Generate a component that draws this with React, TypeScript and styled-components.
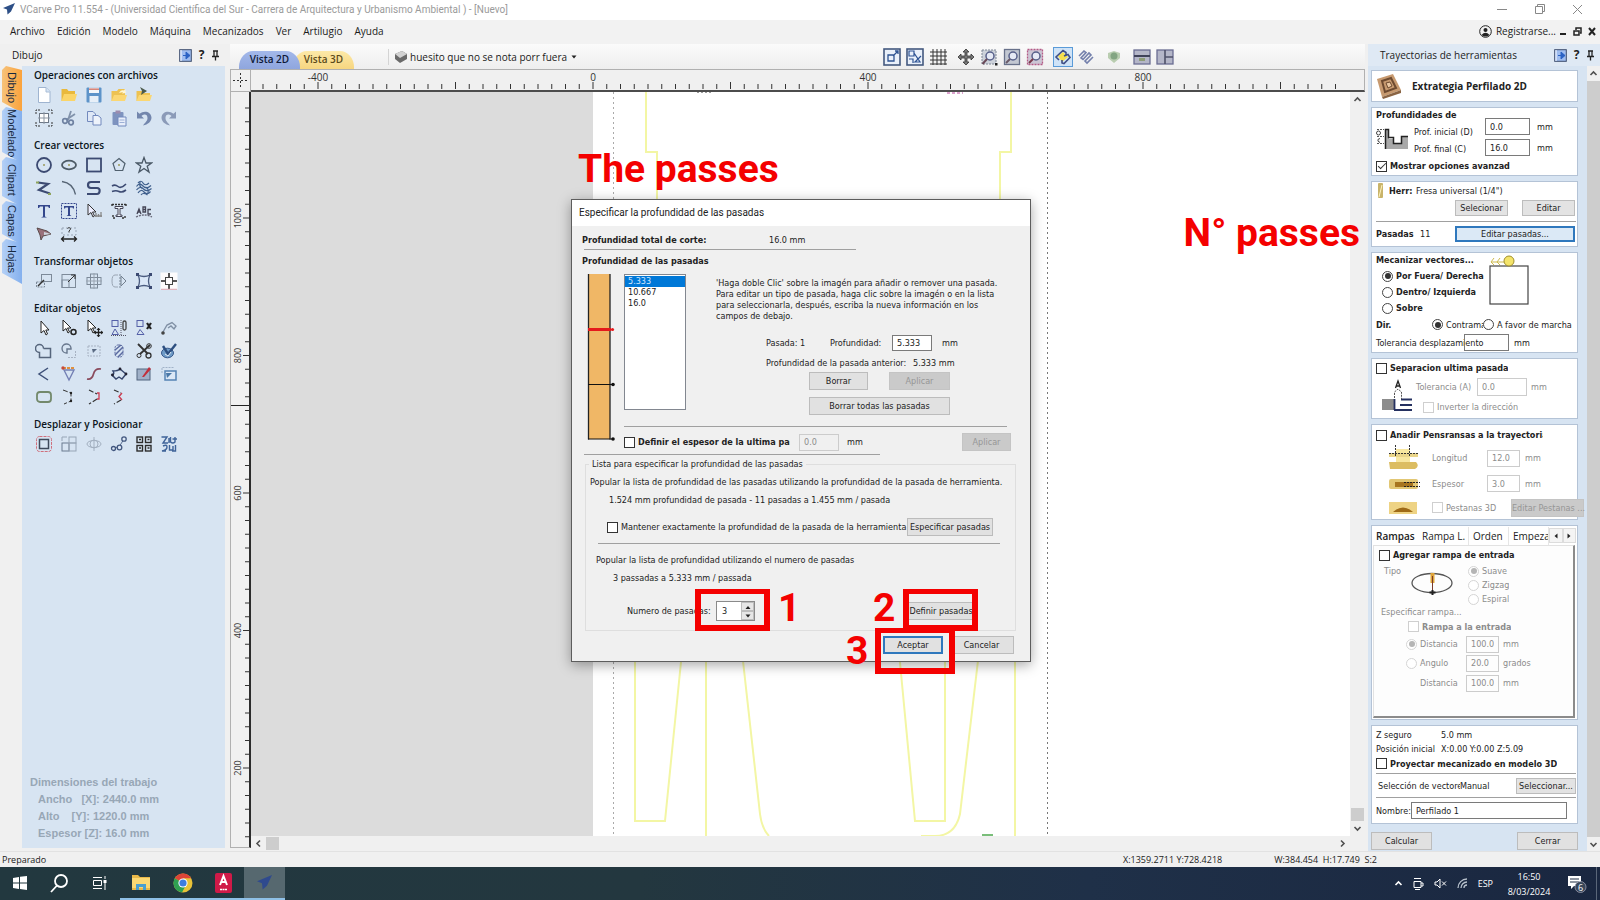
import React from 'react';
import styled, { createGlobalStyle, css } from 'styled-components';

const uiFont = '"Open Sans", "Noto Sans", sans-serif';
const dialogFont = '"DejaVu Sans Condensed", "DejaVu Sans", "Open Sans", sans-serif';
const boldFont = '"Open Sans", "Noto Sans", sans-serif';
const blue = '#d7e4f2';
const line = '#a0a0a0';

const Global = createGlobalStyle`
  * { box-sizing: border-box; }
  body { margin: 0; overflow: hidden; background: #f0f0f0; font-family: ${uiFont}; font-size: 11px; color: #1b1b1b; }
  button, input, select { font: inherit; color: inherit; margin: 0; padding: 0; }
  button { border: 0; background: none; }
  svg { display: block; flex: none; }
  h1, h2, h3, p, dl, dd, dt { margin: 0; font-size: inherit; }
`;

/* ---------- frame ---------- */
const Shell = styled.div`
  display: flex; flex-direction: column; height: 100vh; min-height: 900px; white-space: nowrap;
`;
const TitleBar = styled.header`
  display: flex; align-items: center; height: 20px; padding: 0 18px 2px 3px; gap: 5px; background: #fff; color: #9a9a9a; font: 10px Roboto, sans-serif;
`;
const Spacer = styled.span` flex: 1; `;
const WindowButtons = styled.div<{ $gap: number }>` display: flex; align-items: center; gap: ${p => p.$gap}px; `;
const MenuBar = styled.nav`
  display: flex; align-items: center; height: 24px; padding: 0 4px 2px 10px; gap: 12px; background: #f2f2f2; font-size: 10px;
`;
const MenuItem = styled.button` height: 20px; `;
const Workspace = styled.main` display: flex; flex: 1; min-height: 0; `;

/* ---------- side docks ---------- */
const DockHeader = styled.div<{ $tint?: boolean }>`
  display: flex; align-items: center; height: 22px; gap: 5px; font: 10px ${uiFont};
  padding: 0 5px 0 12px; background: ${p => (p.$tint ? '#dfe9f4' : '#f0f0f0')};
`;
const HelpMark = styled.button` font-weight: 700; width: 9px; font-size: 12px; line-height: 14px; `;
const LeftDock = styled.aside` display: flex; flex-direction: column; width: 225px; flex: none; padding-bottom: 3px; `;
const LeftBody = styled.div` display: flex; flex: 1; min-height: 0; `;
const SideTabs = styled.div` width: 22px; padding-left: 2px; display: flex; flex-direction: column; `;
const SideTab = styled.button<{ $h: number; $on?: boolean }>`
  height: ${p => p.$h}px; width: 20px; writing-mode: vertical-rl; text-align: center; padding-bottom: 4px;
  font-family: "Liberation Sans", sans-serif; font-size: 11px; line-height: 20px; color: #16283f;
  background: ${p => (p.$on ? 'linear-gradient(90deg,#f6c27a,#fba33c)' : 'linear-gradient(90deg,#b4d0f6,#84b0ee)')};
  clip-path: polygon(0 4px, 4px 0, 100% 4px, 100% 100%, 0 calc(100% - 11px));
  margin-bottom: -6px;
`;
const ToolPanel = styled.div`
  flex: 1; background: ${blue}; padding: 1px 0 6px 12px; display: flex; flex-direction: column;
`;
const ToolSection = styled.section` margin-bottom: 8px; `;
const ToolHeading = styled.h2` height: 16px; font: 600 10px/16px ${uiFont}; color: #0c1620; `;
const ToolRow = styled.div` display: flex; height: 23px; margin-left: -3px; `;
const ToolButton = styled.button` width: 25px; height: 23px; display: grid; place-items: center; `;
const JobSize = styled.dl`
  margin-top: auto; margin-left: -4px; color: #97a7b6; font: 700 11px/17px "Liberation Sans", sans-serif; white-space: pre;
`;
const JobLine = styled.dd` padding-left: 8px; `;

/* ---------- centre ---------- */
const Centre = styled.section` flex: 1; min-width: 0; display: flex; flex-direction: column; padding: 0 3px 0 5px; `;
const ViewBar = styled.div` display: flex; align-items: center; height: 25px; padding-left: 9px; background: linear-gradient(#fbfbfb,#eeeeee); `;
const ViewTab = styled.button<{ $on?: boolean }>`
  align-self: flex-end; width: 61px; height: 18px; border-radius: 14px 14px 0 0 / 16px 16px 0 0; margin-right: -7px; padding-bottom: 2px;
  font-size: 10px; font-weight: 600; position: relative; z-index: ${p => (p.$on ? 1 : 0)};
  color: ${p => (p.$on ? '#0d1836' : '#5b4a1a')};
  background: ${p => (p.$on ? 'linear-gradient(#a3b8ea,#8fa6de)' : 'linear-gradient(#fde9a8,#f7d680)')};
`;
const LayerPicker = styled.label` display: flex; align-items: center; gap: 3px; margin-left: 41px; padding-left: 5px; height: 16px; border-left: 1px solid #d4d4d4; `;
const LayerSelect = styled.select` appearance: none; border: 0; background: none; font: 10px ${uiFont}; margin-left: -1px; `;
const ViewTools = styled.div` display: flex; align-items: center; margin-left: 302px; `;
const ViewTool = styled.button<{ $on?: boolean; $sep?: boolean }>`
  width: 20px; height: 20px; display: grid; place-items: center; margin-left: ${p => (p.$sep ? 8 : 3)}px;
  ${p => p.$on && css` background: #cfe3f7; outline: 1px solid #5a9bd8; outline-offset: -1px; `}
`;
const DrawArea = styled.div`
  flex: 1; min-height: 0; display: grid; grid-template: 23px 1fr / 21px 1fr; 
`;
const RulerCorner = styled.div` border: 1px solid #b0b0b0; display: grid; place-items: center; `;
const TopRuler = styled.div` overflow: hidden; border: 1px solid #b0b0b0; border-left: 0; border-bottom: 2px solid #4c4c4c; `;
const LeftRuler = styled.div` overflow: hidden; border: 1px solid #b0b0b0; border-top: 0; border-right: 2px solid #2c2c2c; margin-bottom: 3px; `;
const ScrollGrid = styled.div` position: relative; display: grid; grid-template: 1fr 15px / 1fr 15px; min-height: 0; min-width: 0; `;
const Canvas = styled.div`
  position: relative; overflow: hidden; background: linear-gradient(90deg, #dcdcdc 342px, #fff 342px);
`;
const Scrollbar = styled.div<{ $v?: boolean }>`
  display: flex; flex-direction: ${p => (p.$v ? 'column' : 'row')}; align-items: center; background: #f0f0f0;
`;
const ScrollArrow = styled.button` width: 15px; height: 15px; display: grid; place-items: center; `;
const Thumb = styled.div` width: 13px; height: 13px; background: #cdcdcd; `;

/* ---------- dialog ---------- */
const Dialog = styled.div`
  position: absolute; left: 320px; top: 107px; width: 460px; border: 1px solid #5d5d5d; background: #f0f0f0;
  box-shadow: 0 3px 12px rgba(0,0,0,.35); font-family: ${dialogFont}; font-size: 9px; color: #222;
`;
const DialogTitle = styled.h1` height: 26px; padding-left: 7px; background: #fff; font: 400 10px/25px Roboto, sans-serif; `;
const DialogBody = styled.div` padding: 5px 14px 7px 10px; `;
const Strong = styled.b` font: 700 9px ${dialogFont}; `;
const DRow = styled.div<{ $h?: number; $mt?: number; $pl?: number }>`
  display: flex; align-items: center; height: ${p => p.$h ?? 18}px; margin-top: ${p => p.$mt ?? 0}px; padding-left: ${p => p.$pl ?? 0}px;
`;
const Cell = styled.span<{ $w: number }>` width: ${p => p.$w}px; flex: none; `;
const ClippedCell = styled(Cell)` overflow: hidden; `;
const Rule = styled.hr<{ $w?: number; $ml?: number; $mt?: number }>`
  border: 0; height: 1px; background: ${line}; margin: ${p => p.$mt ?? 0}px 0 0 ${p => p.$ml ?? 0}px; width: ${p => (p.$w ? p.$w + 'px' : 'auto')};
`;
const PassGrid = styled.div` display: grid; grid-template-columns: 37px 1fr; padding-left: 5px; margin-top: 2px; `;
const PassTop = styled.div` display: flex; `;
const ListBox = styled.div`
  width: 62px; height: 136px; flex: none; background: #fff; border: 1px solid #828790; padding-top: 1px;
`;
const ListItem = styled.div<{ $on?: boolean }>`
  height: 11px; line-height: 11px; padding-left: 3px; ${p => p.$on && css` background: #0078d7; color: #cfe6ff; `}
`;
const PassForm = styled.div` margin-left: 30px; padding-top: 4px; `;
const HelpText = styled.p` line-height: 11px; `;
const Button = styled.button<{ $w: number; $h?: number; $hot?: boolean }>`
  width: ${p => p.$w}px; height: ${p => p.$h ?? 18}px; flex: none; background: #e1e1e1; border: 1px solid #bcbcbc; text-align: center; white-space: nowrap;
  ${p => p.$hot && css` border: 2px solid #2f78bd; `}
  &:disabled { background: #cacaca; border-color: #c4c4c4; color: #969696; }
`;
const ButtonPair = styled.div<{ $gap: number; $mt: number; $pl?: number; $end?: boolean }>`
  display: flex; gap: ${p => p.$gap}px; margin-top: ${p => p.$mt}px; padding-left: ${p => p.$pl ?? 0}px; 
  ${p => p.$end && css` justify-content: flex-end; padding-right: 2px; `}
`;
const Field = styled.input<{ $w: number; $h?: number; $ml?: number; $clear?: boolean }>`
  width: ${p => p.$w}px; height: ${p => p.$h ?? 17}px; flex: none; border: 1px solid #7a7a7a; background: ${p => (p.$clear ? 'transparent' : '#fff')}; padding: 0 4px; margin-left: ${p => p.$ml ?? 0}px;
  &:disabled { border-color: #cccccc; color: #8c8c8c; background: transparent; }
`;
const Unit = styled.span<{ $ml?: number }>` margin-left: ${p => p.$ml ?? 7}px; `;
const Box = styled.input.attrs({ type: 'checkbox' })`
  appearance: none; width: 11px; height: 11px; flex: none; border: 1px solid #333; background: #fff; margin-right: 3px;
  display: inline-grid; place-items: center;
  &:checked::after { content: ''; width: 7px; height: 3px; border: solid #333; border-width: 0 0 1px 1px; transform: translateY(-1px) rotate(-45deg); }
  &:disabled { border-color: #cfcfcf; }
`;
const Dot = styled.input.attrs({ type: 'radio' })`
  appearance: none; width: 11px; height: 11px; flex: none; border: 1px solid #444; border-radius: 50%; background: #fff; margin-right: 3px;
  display: inline-grid; place-items: center;
  &:checked::after { content: ''; width: 6px; height: 6px; border-radius: 50%; background: #333; }
  &:disabled { border-color: #d4d4d4; }
  &:disabled:checked::after { background: #b5b5b5; }
`;
const Check = styled.label<{ $w?: number; $dim?: boolean; $bold?: boolean }>`
  display: flex; align-items: center; flex: none; overflow: hidden; width: ${p => (p.$w ? p.$w + 'px' : 'auto')};
  ${p => p.$dim && css` color: #8c8c8c; `}
  ${p => p.$bold && css` font: 700 9px ${dialogFont}; `}
`;
const Group = styled.fieldset` margin: 3px 0 0 3px; padding: 0 0 9px; border: 1px solid #dedede; min-width: 0; `;
const Legend = styled.legend` height: 12px; line-height: 12px; margin-left: 3px; padding: 0 3px; `;
const Spin = styled.span` display: flex; width: 39px; height: 20px; border: 1px solid #8a8a8a; background: #fff; `;
const SpinInput = styled.input` width: 24px; border: 0; padding-left: 5px; background: transparent; `;
const SpinKeys = styled.span` display: grid; flex: 1; `;
const SpinKey = styled.button` background: #e6e6e6; border: 1px solid #bdbdbd; display: grid; place-items: center; min-height: 0; `;

/* annotations drawn over the window */
const Frame = styled.i<{ $x: number; $y: number; $w: number; $h: number }>`
  position: absolute; left: ${p => p.$x}px; top: ${p => p.$y}px; width: ${p => p.$w}px; height: ${p => p.$h}px; border: 6px solid #f40000; border-top-width: 5px; pointer-events: none;
`;
const Mark = styled.strong<{ $x?: number; $right?: number; $y: number }>`
  position: absolute; top: ${p => p.$y}px; color: #f40000; font: 700 39px/40px Roboto, sans-serif;
  ${p => (p.$right !== undefined ? css` right: ${p.$right}px; ` : css` left: ${p.$x}px; `)}
`;

/* ---------- right dock ---------- */
const RightDock = styled.aside` width: 232px; flex: none; background: ${blue}; font-family: ${dialogFont}; font-size: 9px; color: #222; `;
const RightBody = styled.div` display: flex; justify-content: space-between; `;
const CardStack = styled.div` width: 210px; padding: 4px 0 0 3px; display: flex; flex-direction: column; gap: 5px; `;
const Card = styled.section` background: #fff; border: 1px solid #b4c3d6; padding: 0 1px 0 4px; width: 207px; `;
const CardTitle = styled.h2` font: 700 10px/29px ${boldFont}; margin-left: 10px; `;
const SubHead = styled.h3` font: 700 9px/15px ${dialogFont}; `;
const Line = styled.div<{ $h: number; $mt?: number; $pl?: number; $dim?: boolean }>`
  display: flex; align-items: center; height: ${p => p.$h}px; margin-top: ${p => p.$mt ?? 0}px; padding-left: ${p => p.$pl ?? 0}px;
  ${p => p.$dim && css` color: #8c8c8c; `}
`;
const Columns = styled.div<{ $left: number; $h?: number }>` display: grid; grid-template-columns: ${p => p.$left}px 1fr; height: ${p => (p.$h ? p.$h + 'px' : 'auto')}; `;
const DepthFields = styled.div` padding-top: 10px; display: grid; row-gap: 4px; height: 48px; `;
const WithIcon = styled.div` display: flex; `;
const Stack = styled.div` flex: 1; `;
const ToolAction = styled(Button)` background: #e3e3e3; `;
const EditPasses = styled(Button)` background: #dbe9f6; `;
const TabStrip = styled.div` display: flex; align-items: center; height: 19px; margin-left: -4px; font: 10px ${uiFont}; `;
const RampTab = styled.button<{ $w: number; $on?: boolean }>`
  width: ${p => p.$w}px; height: 18px; text-align: left; padding-left: 4px; overflow: hidden; flex: none;
  ${p => (p.$on ? css` font-weight: 600; ` : css` border-right: 1px solid #e6e6e6; `)}
`;
const TabArrow = styled.button` width: 14px; height: 15px; border: 1px solid #dcdcdc; background: #f4f4f4; display: grid; place-items: center; `;
const TabPage = styled.div` margin: 0 1px 1px -3px; padding: 0 0 23px 5px; border: 1px solid #e2e2e2; border-right: 2px solid #8b8b8b; border-bottom: 2px solid #8b8b8b; background: #fdfdfd; `;
const BottomButtons = styled.div` display: flex; justify-content: space-between; margin-top: 3px; `;
const TallScroll = styled(Scrollbar)` width: 13px; height: 786px; `;
const TallThumb = styled.div` width: 13px; flex: 1; background: #cdcdcd; `;

/* ---------- status + task bar ---------- */
const StatusBar = styled.footer`
  display: flex; align-items: center; height: 16px; padding: 0 223px 0 2px; background: #f0f0f0; border-top: 1px solid #e2e2e2; font-size: 9px;
`;
const Coords = styled.span` margin-right: 52px; `;
const TaskBar = styled.nav`
  display: flex; height: 33px; background: linear-gradient(90deg,#22383f,#23373f 40%,#1f3048 68%,#1a2740); color: #fff;
`;
const TaskButton = styled.button<{ $open?: boolean; $on?: boolean; $w: number }>`
  width: ${p => p.$w}px; display: grid; place-items: center; border-bottom: 2px solid ${p => (p.$open || p.$on ? '#8fc0e6' : 'transparent')};
  background: ${p => (p.$on ? '#56686f' : 'none')}; background-clip: padding-box; 
`;
const Tray = styled.div` margin-left: auto; display: flex; align-items: center; font-size: 9px; padding-right: 3px; gap: 10px; `;
const Clock = styled.time` text-align: center; line-height: 15px; width: 48px; margin: 0 4px 0 2px; `;
const Edge = styled.span` border-left: 1px solid #5a6678; height: 33px; margin-left: -1px; `;

/* ---------- drawings ---------- */
const n = '#3c4a72';
const g = '#7d8a99';
const shapes: Record<string, React.ReactNode> = {
  newf: <><path d="M3.500 1.500H11L15 5.500V16.500H3.500Z" fill="#fff" stroke="#9fb4d0" /><path d="M11 1.500V6H15" fill="#d5e4f5" stroke="#a9bdd6" /></>,
  open: <><path d="M1.500 3H7L8.500 5H15V15H1.500Z" fill="#e9b93c" /><path d="M1.500 15L4 8H17L15 15Z" fill="#fbd568" /></>,
  save: <><rect x="1.500" y="1.500" width="15" height="15" rx="1" fill="#5d93c9" /><rect x="4" y="1.500" width="10" height="5.500" fill="#f3f6fa" /><rect x="4" y="2.500" width="10" height="1.300" fill="#cf6a5c" /><rect x="4.500" y="10" width="9" height="6.500" fill="#e7eff8" /></>,
  imp: <><path d="M1.500 5H7L8.500 3H15V15H1.500Z" fill="#edc252" /><path d="M1.500 15L4 9H17L15 15Z" fill="#fbd773" /><path d="M9 7C11 4 12 4 14 4.500L15 3L16 7L12 7.500L13 6" fill="#fff6d4" /></>,
  imp2: <><path d="M1.500 5H7L8.500 7H15V15H1.500Z" fill="#edc252" /><path d="M1.500 15L4 9H17L15 15Z" fill="#fbd773" /><path d="M5 1L12 5L6 9L7 5Z" fill="#4b5a4c" /></>,
  job: <><path d="M1 5V1H5M13 1H17V5M17 13V17H13M5 17H1V13" stroke="#333" strokeDasharray="2 1" fill="none" /><rect x="4.500" y="4.500" width="9" height="9" fill="#fff" stroke="#6c7785" /><path d="M9 3V15M3 9H15" stroke="#8b95a2" /></>,
  cut: <><path d="M11 2L8 11M15 5L6 11" stroke="#8192ab" strokeWidth="1.800" /><circle cx="5" cy="12" r="2.300" fill="none" stroke="#6f82a2" strokeWidth="1.700" /><circle cx="11" cy="13.500" r="2.300" fill="none" stroke="#6f82a2" strokeWidth="1.700" /></>,
  copy: <><path d="M2.500 2.500H8L10.500 5V12.500H2.500Z" fill="#dfe8f6" stroke="#7289bd" /><path d="M8 6.500H13L16 9V16H8Z" fill="#eef3fb" stroke="#7289bd" /></>,
  paste: <><rect x="2.500" y="3" width="11" height="13" rx="1" fill="#7e93bf" /><rect x="5.500" y="1.500" width="5" height="3" fill="#9c8cae" /><path d="M8 8H16V17H8Z" fill="#e8eefa" stroke="#7289bd" /><path d="M9.500 11H14.500M9.500 13.500H14.500" stroke="#9db0d6" /></>,
  undo: <path d="M2 2.500V9.500H9L6.500 7C9 4.500 12.500 5 12.500 9C12.500 12 10.500 13 8 16.500C13 15.500 16.500 12.500 16.500 8.500C16 2.500 9 1 4.500 4.800Z" fill="#7386ad" />,
  redo: <path d="M16 2.500V9.500H9L11.500 7C9 4.500 5.500 5 5.500 9C5.500 12 7.500 13 10 16.500C5 15.500 1.500 12.500 1.500 8.500C2 2.500 9 1 13.500 4.800Z" fill="#8b9ab8" />,
  circle: <><circle cx="9" cy="9" r="7" fill="none" stroke={n} strokeWidth="1.800" /><circle cx="9" cy="9" r="1" fill="#9a9a5a" /></>,
  ellipse: <><ellipse cx="9" cy="9" rx="7" ry="4.300" fill="none" stroke="#4d5b66" strokeWidth="1.800" /><circle cx="9" cy="9" r="1" fill="#9a9a5a" /></>,
  rect: <rect x="2" y="2.500" width="14" height="13" fill="none" stroke={n} strokeWidth="1.800" />,
  poly: <><path d="M9 2.500L15 7.500L12.700 14.500H5.300L3 7.500Z" fill="none" stroke="#50606e" strokeWidth="1.200" /><circle cx="9" cy="9" r="1" fill="#9a9a5a" /></>,
  star: <path d="M9 1.500L11 7H16.500L12.200 10.300L14 16L9 12.500L4 16L5.800 10.300L1.500 7H7Z" fill="none" stroke="#4a5866" strokeWidth="1.300" />,
  zig: <><path d="M3 3.500L13 5L4 11L15 14.500" fill="none" stroke={n} strokeWidth="2.200" /><path d="M1 3.500H4M13 15H16" stroke="#8ea45c" strokeWidth="2" /></>,
  arc: <path d="M2 2.500Q13 4 15.500 15.500" fill="none" stroke="#566474" strokeWidth="1.300" />,
  s: <path d="M15 3H6C2 3 2 9 6 9H12C16 9 15 15 12 15H2" fill="none" stroke={n} strokeWidth="2.200" />,
  wave: <><path d="M2 7Q5 5 8 7.500T16 5" fill="none" stroke={n} strokeWidth="1.600" /><path d="M2 12.500Q6 11 9 12.500T16 11" fill="none" stroke={n} strokeWidth="1.600" /></>,
  swirl: <g fill="none" stroke="#3f5f8c" strokeWidth="1.200"><path d="M3 4Q6 .5 8 4T14 4M1.500 7.500Q4.500 3 8 7T16 6.500M1.500 11Q5 6.500 8.500 10T16.500 9.500M3 14Q6 9.500 9 13T15.500 12.500M6 16Q8 13 12.500 16" /><path d="M5 3Q4 8 7.500 9.500M10.500 8Q14 9 13 14" /></g>,
  text: <path d="M3 3H15V6H14L13 4.500H10V14.500L12 15.500H6L8 14.500V4.500H5L4 6H3Z" fill="#34478c" />,
  textbox: <><rect x="1.500" y="1.500" width="15" height="15" fill="none" stroke="#34478c" strokeDasharray="2 1" /><path d="M4 4H14V6.500H13L12.500 5.500H10V13L11.500 14H6.500L8 13V5.500H5.500L5 6.500H4Z" fill="#34478c" /></>,
  textsel: <><path d="M3 2V13L6 10.500L8 15L9.500 14L7.500 10H11Z" fill="#eef" stroke="#333" /><path d="M10 14H17M11 11V15M13.500 12V15M16 10V15" stroke="#888" strokeWidth="1.300" /></>,
  textarc: <><path d="M2 2.500H16M2 2V5M16 2V5M3 13V16H6M12 16H15V13" stroke="#333" strokeDasharray="2 1" strokeWidth="1.400" /><path d="M5 4.500H13V6.500H10V13H12V14.500H6V13H8V6.500H5Z" fill="#eef3fa" stroke="#445" /></>,
  textcurve: <><path d="M1 15Q9 11 17 15" fill="none" stroke="#667" strokeDasharray="2 1" strokeWidth="1.300" /><path d="M2 12L4 7L6 12M3 10H5M8 4.500V10H10.500V7.500H8V5H10.500V7.500M16 7.500H13V12H16" fill="none" stroke="#445" strokeWidth="1.300" /></>,
  bird: <><path d="M2 3L12 6L16 9L8 11L6 15L5 10Z" fill="#99707a" stroke="#5a4a4a" /><path d="M9 7L16 9L9 10Z" fill="#cfd6dd" /></>,
  measure: <><path d="M1.500 14H16.500M4 11.500L1.500 14L4 16.500M14 11.500L16.500 14L14 16.500" stroke="#222" strokeWidth="1.300" fill="none" /><rect x="2" y="3" width="14" height="7" fill="none" stroke="#99a5b5" strokeDasharray="2 2" /><path d="M7.500 3.500Q9 1.500 10.500 3.500Q10.500 5 9 6V7.500" stroke="#333" fill="none" /></>,
  move: <><rect x="6.500" y="2.500" width="10" height="7" fill="none" stroke={g} /><rect x="1.500" y="10" width="8" height="5" fill="none" stroke={g} strokeDasharray="2 1" /><path d="M3 14L9 8" stroke="#333" strokeWidth="1.500" /></>,
  size: <><rect x="2" y="2.500" width="13.500" height="13" fill="none" stroke={g} /><rect x="2" y="8" width="7" height="7.500" fill="none" stroke={g} /><path d="M8 10L15 3M11 3H15V7" stroke="#333" fill="none" /></>,
  centre: <><rect x="5.500" y="2" width="7" height="14" fill="none" stroke={g} /><rect x="2" y="5.500" width="14" height="7" fill="none" stroke={g} /><path d="M9 1V17M1 9H17" stroke="#98a3b0" /></>,
  mirror: <><path d="M8 3H5Q2 3 2 9T5 15H8" fill="none" stroke="#9aa5b3" /><path d="M10 2V16" stroke={g} strokeDasharray="2 1" /><path d="M11 4L16 9L11 14Z" fill="none" stroke="#73808f" /></>,
  distort: <><path d="M3 3Q9 6 15 3Q12 9 15 15Q9 12 3 15Q6 9 3 3Z" fill="#dbe8f8" stroke="#4b5c80" strokeWidth="1.300" /><g fill="#3c4a72"><rect x="1" y="1" width="3" height="3" /><rect x="14" y="1" width="3" height="3" /><rect x="1" y="14" width="3" height="3" /><rect x="14" y="14" width="3" height="3" /></g></>,
  align: <><rect x=".5" y=".5" width="17" height="17" fill="#fdfbfc" /><rect x="5.500" y="5.500" width="7" height="7" fill="none" stroke="#444" /><path d="M9 1V5M9 13V17M1 9H5M13 9H17" stroke="#222" strokeWidth="1.500" /><path d="M1 17.300H17" stroke="#dca4b0" /></>,
  sel: <path d="M6 2V14L9 11.500L11 16L12.500 15L10.800 11H14Z" fill="#fff" stroke="#222" />,
  node: <><path d="M3 1V12L6 9.500L8 14L9.500 13L7.500 9H11Z" fill="#fff" stroke="#222" /><circle cx="13.500" cy="13" r="2.500" fill="none" stroke="#222" strokeWidth="1.500" /></>,
  nodemove: <><path d="M3 1V12L6 9.500L8 14L9.500 13L7.500 9H11Z" fill="#fff" stroke="#222" /><path d="M13.500 9V18M9 13.500H18" stroke="#222" strokeWidth="1.300" /><path d="M13.500 9L15.500 11H11.500ZM13.500 18L15.500 16H11.500ZM9 13.500L11 11.500V15.500ZM18 13.500L16 11.500V15.500Z" fill="#222" /></>,
  group: <><rect x="2" y="1.500" width="6" height="6" fill="none" stroke="#5560a8" /><path d="M2 15.500L5 10L8.500 15.500Z" fill="none" stroke="#5560a8" /><path d="M11 1V17M1 16.500H17" stroke="#556" strokeDasharray="1 1" /><rect x="13" y="2" width="3" height="9" rx="1.500" fill="none" stroke="#444" strokeWidth="1.300" /></>,
  ungroup: <><rect x="2" y="1.500" width="6" height="6" fill="none" stroke="#5560a8" /><path d="M2 15.500L5 10.500L9 15.500Z" fill="none" stroke="#5560a8" /><path d="M12 4L16 10M16 4L12 10" stroke="#222" strokeWidth="2.200" /></>,
  measure2: <><path d="M3 13L7 6L12 3.500L16 7L14 10L11 7L8 9" fill="none" stroke="#8090a5" strokeWidth="1.400" /><circle cx="3" cy="14" r="1.800" fill="#444" /></>,
  weld: <path d="M8.500 6.500A4 4 0 1 0 4.500 10.500V15.500H15.500V6.500H8.500" fill="none" stroke="#56657c" strokeWidth="1.500" />,
  subtract: <><path d="M11 6A4.500 4.500 0 1 0 7 11V7H11Z" fill="none" stroke="#68778d" strokeWidth="1.400" /><path d="M8 15.500H15.500V8" fill="none" stroke="#a7b2c2" strokeDasharray="2 1" /></>,
  overlap: <><rect x="3" y="4" width="12" height="10" fill="none" stroke="#a7b2c2" strokeDasharray="2 1" /><path d="M7 7H12L8 11Z" fill="#5b6b83" /></>,
  trim: <><rect x="5" y="3" width="8" height="12" rx="3" fill="none" stroke="#5a6aa0" strokeDasharray="2 1" /><path d="M5 8L11 3M5 13L13 5M8 15L13 10" stroke="#5a6aa0" strokeWidth="1.500" /></>,
  scissors: <><path d="M3 2L13 12M15 3L5 12" stroke="#333" strokeWidth="1.800" /><circle cx="13.500" cy="13.500" r="2.500" fill="none" stroke="#333" strokeWidth="1.300" /><circle cx="4" cy="13.500" r="2" fill="none" stroke="#333" /><circle cx="14" cy="4" r="2.300" fill="none" stroke="#333" /></>,
  fit: <><ellipse cx="7.500" cy="11" rx="6" ry="4.800" fill="#6f9cc8" stroke="#37588a" /><path d="M3 4L8 12L16 2" fill="none" stroke="#2d4f80" strokeWidth="2.400" /><path d="M5 12L8 14L11 10" fill="none" stroke="#dfeaf6" /></>,
  corner: <path d="M13 3L4 9L13 15" fill="none" stroke="#3d5078" strokeWidth="1.500" />,
  tri: <><path d="M4 5H14L9 15Z" fill="none" stroke="#7480b4" strokeWidth="1.400" /><path d="M3 3H15" stroke="#e0903e" strokeWidth="2.200" strokeDasharray="3 1" /><circle cx="3" cy="3" r="1.700" fill="#c64a3a" /></>,
  curve: <path d="M2 14Q7 15 8.500 9T16 4" fill="none" stroke="#8a4a5c" strokeWidth="1.700" />,
  join: <><path d="M3 6Q5 9 2 10L6 14L9 12L12 14L16 9L10 4Q8 6 3 6Z" fill="none" stroke="#35456c" strokeWidth="1.400" /><circle cx="2.500" cy="10" r="1.400" fill="#223" /><circle cx="16" cy="9" r="1.400" fill="#223" /><circle cx="10" cy="4" r="1.400" fill="#223" /></>,
  erase: <><rect x="2" y="4" width="13" height="11" fill="#9fb0c8" stroke="#53647f" /><path d="M7 12L14 2L16 4L9 12Z" fill="#c2303c" /></>,
  layer: <><path d="M2 8V2.500H14" fill="none" stroke="#a0b2c8" strokeDasharray="2 1" /><rect x="5" y="6" width="11" height="9" fill="#dce8f6" stroke="#5683b4" strokeWidth="1.500" /><path d="M6 8H12L7 13Z" fill="#4978a8" /></>,
  round: <rect x="2" y="4" width="14" height="10" rx="3" fill="none" stroke="#73896c" strokeWidth="1.800" />,
  ext1: <><path d="M3 2L11 5V13L4 16" fill="none" stroke="#333" strokeDasharray="5 2" /><circle cx="11" cy="5" r="1.200" fill="#222" /><circle cx="11" cy="13" r="1.200" fill="#222" /></>,
  ext2: <><path d="M4 2L12 6M12 11L4 16" fill="none" stroke="#333" strokeWidth="1.200" strokeDasharray="5 2" /><path d="M12 5H14V11H12" fill="none" stroke="#cc3a50" strokeWidth="1.300" /></>,
  ext3: <><path d="M4 2L11 5M11 12L4 16" fill="none" stroke="#333" strokeWidth="1.200" strokeDasharray="5 2" /><path d="M12 5L9 8.500L12 12" fill="none" stroke="#cc3a50" strokeWidth="1.300" /></>,
  offset: <><rect x="1.500" y="1.500" width="15" height="15" rx="3" fill="none" stroke="#cf6f7c" strokeDasharray="3 1" /><rect x="4.500" y="4.500" width="9" height="9" fill="none" stroke="#3f4a5c" strokeWidth="1.500" /></>,
  array: <g fill="none" stroke="#97a5b6"><rect x="2" y="8" width="7" height="8" stroke="#6b7b8f" /><rect x="9" y="8" width="7" height="8" /><rect x="9" y="2" width="7" height="6" /><path d="M2 6V2H7" /></g>,
  polar: <g fill="none" stroke="#a3b0c0"><ellipse cx="9" cy="9" rx="7" ry="3.500" /><circle cx="9" cy="9" r="4" /><path d="M9 2V16" /></g>,
  paths: <><path d="M3 13L9 12L14 4" fill="none" stroke="#5b6f92" /><g fill="#dce8f6" stroke="#42577f" strokeWidth="1.300"><circle cx="3.500" cy="13.500" r="2" /><circle cx="9.500" cy="12.500" r="2.300" /><circle cx="14" cy="4" r="2.200" /></g></>,
  nest: <g fill="none" stroke="#2c2c2c" strokeWidth="1.400"><rect x="2" y="2" width="5.500" height="5.500" /><rect x="10.500" y="2" width="5.500" height="5.500" /><rect x="2" y="10.500" width="5.500" height="5.500" /><rect x="10.500" y="10.500" width="5.500" height="5.500" /><path d="M4 4.500H6M12.500 4.500H14.500M4 13H6M12.500 13H14.500" /></g>,
  puzzle: <g fill="none" stroke="#3f6399" strokeWidth="1.400"><path d="M1.500 2H7L3 8H8M10.500 2V7Q13 9 15 7V2M12.500 4H17M3 11Q7 9 7 12T2 16H6M9.500 10V15H13V11M15.500 10V16H12M9 3V8" /></g>,

  zfit: <><rect x="1" y="1" width="16" height="16" fill="#e9f0fa" stroke="#44597f" strokeWidth="1.600" /><path d="M5 7H11V13H5ZM10 8L15 3M12 3H15V6" fill="none" stroke="#2e5393" strokeWidth="1.300" /></>,
  snap: <><rect x="1" y="1" width="16" height="16" fill="#e9f0fa" stroke="#44597f" strokeWidth="1.600" /><path d="M3 3H8V8H3ZM8 5L14 14H9L15 8M3 11H7V15" fill="none" stroke="#2e5393" strokeWidth="1.200" /></>,
  grid: <path d="M4 1V17M8 1V17M12 1V17M16 1V17M1 4H18M1 8H18M1 12H18M1 16H18" stroke="#333" />,
  pan: <path d="M9 1L12 4H10V8H14V6L17 9L14 12V10H10V14H12L9 17L6 14H8V10H4V12L1 9L4 6V8H8V4H6Z" fill="#777" stroke="#333" strokeWidth=".8" />,
  zin: <><rect x="2" y="2" width="14" height="14" fill="#cdd2da" stroke="#7e8796" strokeDasharray="2 1" /><circle cx="10" cy="8" r="4" fill="#e6eaf5" stroke="#57608a" strokeWidth="1.500" /><path d="M7 11L2.500 16" stroke="#6a4a58" strokeWidth="2" /><rect x="15" y="15" width="2.500" height="2.500" fill="#222" /></>,
  zout: <><rect x="1.500" y="1.500" width="15" height="15" fill="#c3c8d2" stroke="#68718a" strokeWidth="1.300" /><circle cx="10" cy="8" r="4" fill="#e6eaf5" stroke="#57608a" strokeWidth="1.500" /><path d="M7 11L3 15" stroke="#6a5a68" strokeWidth="2" /></>,
  zsel: <><rect x="1.500" y="1.500" width="15" height="15" fill="#ccc6d4" stroke="#b45a86" strokeDasharray="2 1" strokeWidth="1.300" /><circle cx="10" cy="8" r="4" fill="#e6eaf5" stroke="#57608a" strokeWidth="1.500" /><path d="M7 11L3 15" stroke="#7a3a4a" strokeWidth="2" /></>,
  tp: <><path d="M4 8L9 4L14 9L8 14Z" fill="#f5df4e" /><path d="M5 12L2 9L9 2.500L12 4.500V8M8 12V15L10 15.500L16 9.500L14 6.500L10 8" fill="none" stroke="#3f4e86" strokeWidth="1.600" /></>,
  tp2: <path d="M2 8L7 3L9 4.500L4 10L6 11.500L12 5L14 7L8 13L10 15L16 9" fill="none" stroke="#7480ac" strokeWidth="1.600" />,
  solid: <><path d="M3 5L9 3L15 5V10L9 15L3 10Z" fill="#b9cdb0" /><circle cx="9" cy="8" r="3.500" fill="#83a582" /></>,
  hsplit: <><rect x="1" y="2" width="16" height="14" fill="#b4b6c8" stroke="#6a6d92" strokeWidth="1.300" /><path d="M1 8H17" stroke="#3f4259" strokeWidth="2" /><rect x="6" y="10" width="6" height="3" fill="#8d9c78" /></>,
  vsplit: <><rect x="1" y="2" width="16" height="14" fill="#b4b6c8" stroke="#6a6d92" strokeWidth="1.300" /><path d="M9 2V16M9 9H17" stroke="#4f5269" strokeWidth="1.600" /></>,
};
const Icon = ({ k, s = 18 }: { k: string; s?: number }) => <svg width={s} height={s} viewBox="0 0 18 18" fill="none" aria-hidden>{shapes[k]}</svg>;

const Chevron = ({ d, c = '#505050' }: { d: 'u' | 'd' | 'l' | 'r'; c?: string }) => (
  <svg width="9" height="9" viewBox="0 0 9 9"><path fill="none" stroke={c} strokeWidth="1.600"
    d={{ u: 'M1.500 6L4.500 3L7.500 6', d: 'M1.500 3L4.500 6L7.500 3', l: 'M6 1.500L3 4.500L6 7.500', r: 'M3 1.500L6 4.500L3 7.500' }[d]} /></svg>
);
const Tri = ({ d }: { d: 'u' | 'd' | 'l' | 'r' }) => (
  <svg width="6" height="6" viewBox="0 0 6 6"><path fill="#222" d={{ u: 'M.5 5L3 2L5.500 5Z', d: 'M.5 1.500L3 4.500L5.500 1.500Z', l: 'M4.500 .5L1.500 3L4.500 5.500Z', r: 'M1.500 .5L4.500 3L1.500 5.500Z' }[d]} /></svg>
);
const Pin = () => <svg width="9" height="11" viewBox="0 0 9 11"><path d="M2 1H7M3 1V6M6 1V6M1 6.500H8M4.500 7V10.500" stroke="#222" strokeWidth="1.300" fill="none" /></svg>;
const DockIcon = () => <svg width="13" height="13" viewBox="0 0 13 13"><rect x=".7" y=".7" width="11.600" height="11.600" fill="#9fbdf0" stroke="#3d4d6c" /><path d="M2 1V12" stroke="#fff" /><path d="M4 6.500H11M7 3L11 6.500L7 10Z" fill="#2b62c4" stroke="#2b62c4" /></svg>;
const Logo = ({ s = 12, c = '#2d4f86' }: { s?: number; c?: string }) => <svg width={s} height={s} viewBox="0 0 12 12"><path d="M12 0L0 5L4 6.500L4.500 11.500L8 8.500Z" fill={c} /></svg>;

const TopScale = () => {
  const zero = 342;
  const ticks = [];
  for (let i = -24; i <= 54; i++) ticks.push(i);
  return (
    <svg width="1112" height="20" fontFamily="Open Sans, sans-serif" fontSize="10" fill="#333">
      {ticks.map(i => <path key={i} d={`M${zero + i * 13.75} ${i % 10 === 0 ? 12 : 14}V19`} stroke="#333" />)}
      {[[-20, '-400'], [0, '0'], [20, '400'], [40, '800']].map(([i, t]) => <text key={t} x={zero + Number(i) * 13.75} y="11" textAnchor="middle">{t}</text>)}
    </svg>
  );
};
const SideScale = () => {
  const ticks = [];
  for (let i = 4; i <= 58; i++) ticks.push(i);
  const y = (i: number) => 813.5 - i * 13.75;
  return (
    <svg width="18" height="757" fontFamily="Open Sans, sans-serif" fontSize="9" fill="#333">
      {ticks.map(i => <path key={i} d={`M${i % 10 === 0 ? 12 : 14} ${y(i)}H18`} stroke="#333" />)}
      {[10, 20, 30, 40, 50].map(i => <text key={i} textAnchor="middle" transform={`translate(10 ${y(i)}) rotate(-90)`}>{i * 20}</text>)}
      <path d="M0 313.500H18" stroke="#222" />
    </svg>
  );
};
/* Chair profile on the sheet; coordinates are relative to the drawing area */
const Drawing = () => (
  <svg width="1098" height="744" fill="none">
    <path d="M362.500 0V744" stroke="#aaa" strokeDasharray="2 3" />
    <path d="M796.500 0V744" stroke="#777" strokeDasharray="2 3" />
    <g stroke="#f3f6a4" strokeWidth="2">
      <path d="M395 0V60H406V120" />
      <path d="M760 0V60H749V120" />
      <path d="M384 560V729H414L431 560" />
      <path d="M455 560V744" />
      <path d="M491 560L509 722Q511 737 518 744" />
      <path d="M648 560L664 729H694V560" />
      <path d="M728 560L709 722Q704 744 684 744H670" />
      <path d="M764 560V744" />
    </g>
    <path d="M446 .5H460" stroke="#999" strokeDasharray="2 2" /><path d="M696 1H712" stroke="#b8479c" strokeDasharray="3 2" />
    <path d="M731 743H742" stroke="#4ea84e" strokeWidth="1.500" />
  </svg>
);
const Wood = () => (
  <svg width="30" height="168" viewBox="0 0 30 168">
    <rect x="1" y="0" width="22" height="165" fill="#f0b766" />
    <path d="M1.500 0V165.500M23 0V165.500" stroke="#222" strokeWidth="1.300" />
    <path d="M1 55.500H24" stroke="#e5191c" strokeWidth="3" /><circle cx="25.500" cy="55.500" r="1.600" fill="#e5191c" />
    <path d="M1 110.500H25M1 165H25" stroke="#111" strokeWidth="1.200" /><circle cx="26" cy="110.500" r="1.800" fill="#111" /><circle cx="26" cy="165" r="1.800" fill="#111" />
  </svg>
);

const toolGroups: [string, string[][]][] = [
  ['Operaciones con archivos', [['newf', 'open', 'save', 'imp', 'imp2'], ['job', 'cut', 'copy', 'paste', 'undo', 'redo']]],
  ['Crear vectores', [['circle', 'ellipse', 'rect', 'poly', 'star'], ['zig', 'arc', 's', 'wave', 'swirl'], ['text', 'textbox', 'textsel', 'textarc', 'textcurve'], ['bird', 'measure']]],
  ['Transformar objetos', [['move', 'size', 'centre', 'mirror', 'distort', 'align']]],
  ['Editar objetos', [['sel', 'node', 'nodemove', 'group', 'ungroup', 'measure2'], ['weld', 'subtract', 'overlap', 'trim', 'scissors', 'fit'], ['corner', 'tri', 'curve', 'join', 'erase', 'layer'], ['round', 'ext1', 'ext2', 'ext3']]],
  ['Desplazar y Posicionar', [['offset', 'array', 'polar', 'paths', 'nest', 'puzzle']]],
];
const viewTools = ['zfit', 'snap', 'grid', '|pan', 'zin', 'zout', 'zsel', '|tp', 'tp2', '|solid', '|hsplit', 'vsplit'];

const LeftPanel = () => (
  <LeftDock>
    <DockHeader>Dibujo<Spacer /><DockIcon /><HelpMark>?</HelpMark><Pin /></DockHeader>
    <LeftBody>
      <SideTabs>
        <SideTab $h={47} $on>Dibujo</SideTab><SideTab $h={56}>Modelado</SideTab><SideTab $h={50}>Clipart</SideTab><SideTab $h={44}>Capas</SideTab><SideTab $h={45}>Hojas</SideTab>
      </SideTabs>
      <ToolPanel>
        {toolGroups.map(([title, rows]) => (
          <ToolSection key={title}>
            <ToolHeading>{title}</ToolHeading>
            {rows.map((r, i) => <ToolRow key={i}>{r.map(k => <ToolButton key={k} aria-label={k}><Icon k={k} /></ToolButton>)}</ToolRow>)}
          </ToolSection>
        ))}
        <JobSize>
          <dt>Dimensiones del trabajo</dt>
          <JobLine>{'Ancho   [X]: 2440.0 mm'}</JobLine>
          <JobLine>{'Alto    [Y]: 1220.0 mm'}</JobLine>
          <JobLine>{'Espesor [Z]: 16.0 mm'}</JobLine>
        </JobSize>
      </ToolPanel>
    </LeftBody>
  </LeftDock>
);

const PassDialog = () => (
  <Dialog role="dialog" aria-labelledby="dlg">
    <DialogTitle id="dlg">Especificar la profundidad de las pasadas</DialogTitle>
    <DialogBody>
      <DRow><Cell $w={187}><Strong>Profundidad total de corte:</Strong></Cell>16.0 mm</DRow>
      <Rule $w={272} $ml={2} />
      <DRow $h={22}><Strong>Profundidad de las pasadas</Strong></DRow>
      <PassGrid>
        <Wood />
        <div>
          <PassTop>
            <ListBox role="listbox">
              <ListItem role="option" $on>5.333</ListItem><ListItem role="option">10.667</ListItem><ListItem role="option">16.0</ListItem>
            </ListBox>
            <PassForm>
              <HelpText>'Haga doble Clic' sobre la imagén para añadir o remover una pasada.<br />Para editar un tipo de pasada, haga clic sobre la imagén o en la lista<br />para seleccionarla, después, escriba la nueva información en los<br />campos de debajo.</HelpText>
              <DRow $h={17} $mt={12} $pl={50}><Cell $w={64}>Pasada: 1</Cell><Cell as="label" htmlFor="depth" $w={62}>Profundidad:</Cell><Field id="depth" $w={40} $h={16} defaultValue="5.333" /><Unit $ml={10}>mm</Unit></DRow>
              <DRow $h={16} $mt={4} $pl={50}><Cell $w={147}>Profundidad de la pasada anterior:</Cell>5.333 mm</DRow>
              <ButtonPair $gap={21} $mt={1} $pl={93}><Button $w={59}>Borrar</Button><Button $w={61} disabled>Aplicar</Button></ButtonPair>
              <ButtonPair $gap={0} $mt={7} $pl={93}><Button $w={141}>Borrar todas las pasadas</Button></ButtonPair>
            </PassForm>
          </PassTop>
          <Rule $w={383} $mt={11} />
          <DRow $mt={6}>
            <Check $w={166} $bold><Box />Definir el espesor de la ultima pasada</Check>
            <Field $w={40} $h={17} $ml={9} disabled defaultValue="0.0" aria-label="Espesor" /><Unit $ml={8}>mm</Unit>
            <Spacer /><Button $w={49} disabled>Aplicar</Button><Cell $w={5} />
          </DRow>
        </div>
      </PassGrid>
      <Rule $w={296} $ml={2} $mt={3} />
      <Group>
        <Legend>Lista para especificar la profundidad de las pasadas</Legend>
        <DRow $mt={3} $pl={4}>Popular la lista de profundidad de las pasadas utilizando la profundidad de la pasada de herramienta.</DRow>
        <DRow $pl={23}>1.524 mm profundidad de pasada - 11 pasadas a 1.455 mm / pasada</DRow>
        <DRow $mt={9} $pl={21}><Check $w={300}><Box />Mantener exactamente la profundidad de la pasada de la herramienta</Check><Button $w={86}>Especificar pasadas</Button></DRow>
        <Rule $w={402} $ml={12} $mt={7} />
        <DRow $mt={7} $pl={10}>Popular la lista de profundidad utilizando el numero de pasadas</DRow>
        <DRow $pl={27}>3 passadas a 5.333 mm / passada</DRow>
        <DRow $h={20} $mt={14} $pl={41}>
          <Cell as="label" htmlFor="passes" $w={89}>Numero de pasadas:</Cell>
          <Spin><SpinInput id="passes" defaultValue="3" /><SpinKeys><SpinKey aria-label="Más"><Tri d="u" /></SpinKey><SpinKey aria-label="Menos"><Tri d="d" /></SpinKey></SpinKeys></Spin>
          <Cell $w={152} /><Button $w={68}>Definir pasadas</Button>
        </DRow>
      </Group>
      <ButtonPair $gap={6} $mt={5} $end><Button $w={60} $hot>Aceptar</Button><Button $w={65}>Cancelar</Button></ButtonPair>
    </DialogBody>
    <Frame $x={123} $y={389} $w={75} $h={42} /><Frame $x={331} $y={389} $w={75} $h={42} /><Frame $x={303} $y={428} $w={80} $h={46} />
    <Mark $x={206} $y={388}>1</Mark><Mark $x={301} $y={388}>2</Mark><Mark $x={274} $y={431}>3</Mark>
  </Dialog>
);

const CentrePanel = () => (
  <Centre>
    <ViewBar>
      <ViewTab $on>Vista 2D</ViewTab><ViewTab>Vista 3D</ViewTab>
      <LayerPicker>
        <svg width="14" height="14" viewBox="0 0 14 14"><path d="M1 4L8 1L13 4V9L6 13L1 9Z" fill="#6a6a6a" /><path d="M1 4L8 1L13 4L6 8Z" fill="#d2d2d2" /></svg>
        <LayerSelect aria-label="Capa"><option>huesito que no se nota porr fuera</option></LayerSelect><Tri d="d" />
      </LayerPicker>
      <ViewTools>
        {viewTools.map(k => <ViewTool key={k} $sep={k[0] === '|'} $on={k === '|tp'} aria-label={k}><Icon k={k.replace('|', '')} /></ViewTool>)}
      </ViewTools>
    </ViewBar>
    <DrawArea>
      <RulerCorner><svg width="15" height="15"><path d="M7.500 0V15M0 7.500H15" stroke="#333" strokeDasharray="2 2" /></svg></RulerCorner>
      <TopRuler><TopScale /></TopRuler>
      <LeftRuler><SideScale /></LeftRuler>
      <ScrollGrid>
        <Canvas>
          <Drawing />
          <Mark $x={327} $y={57}>The passes</Mark>
          <PassDialog />
        </Canvas>
        <Scrollbar $v><ScrollArrow aria-label="Arriba"><Chevron d="u" /></ScrollArrow><Spacer /><Thumb /><ScrollArrow aria-label="Abajo"><Chevron d="d" /></ScrollArrow></Scrollbar>
        <Scrollbar><ScrollArrow aria-label="Izquierda"><Chevron d="l" /></ScrollArrow><Thumb /><Spacer /><ScrollArrow aria-label="Derecha"><Chevron d="r" /></ScrollArrow></Scrollbar>
        <Mark $right={5} $y={121}>N° passes</Mark>
      </ScrollGrid>
    </DrawArea>
  </Centre>
);

const RightPanel = () => (
  <RightDock>
    <DockHeader $tint>Trayectorias de herramientas<Spacer /><DockIcon /><HelpMark>?</HelpMark><Pin /></DockHeader>
    <RightBody>
      <CardStack>
        <Card><Line $h={30}>
          <svg width="26" height="26" viewBox="0 0 26 26"><path d="M1 6L17 1L25 17L6 24Z" fill="#c79a70" /><path d="M6 24L25 17V20L7 26Z" fill="#8a6443" /><path d="M6 8L15 5L20 15L9 19Z" fill="none" stroke="#6d4a30" strokeWidth="2" /><path d="M10 10L14 9L16 13L12 15Z" fill="#ecc9a4" stroke="#6d4a30" /></svg>
          <CardTitle>Extrategia Perfilado 2D</CardTitle></Line></Card>

        <Card>
          <Columns $left={109} $h={49}>
            <div>
              <SubHead>Profundidades de</SubHead>
              <WithIcon>
                <svg width="38" height="32" viewBox="0 0 38 32"><path d="M9 6H13V16H18V21H26V13H32V26H9Z" fill="#a9a9a9" /><path d="M9.500 26V6.500H12.500V14.500H17.500V20.500H25.500V13.500H32" fill="none" stroke="#222" strokeWidth="1.500" /><path d="M1 6.500H8M1 13.500H8M1 20.500H8" stroke="#555" strokeDasharray="2 1" /><circle cx="2.500" cy="10" r="2" fill="none" stroke="#444" /><path d="M4 15.500Q1 16 2 18T4 19" stroke="#444" fill="none" /></svg>
                <div><Line $h={17}><label htmlFor="pi">Prof. inicial (D)</label></Line><Line $h={17}><label htmlFor="pf">Prof. final (C)</label></Line></div>
              </WithIcon>
            </div>
            <DepthFields>
              <Line $h={17}><Field id="pi" $w={45} defaultValue="0.0" /><Unit>mm</Unit></Line>
              <Line $h={17}><Field id="pf" $w={45} defaultValue="16.0" /><Unit>mm</Unit></Line>
            </DepthFields>
          </Columns>
          <Line $h={18}><Check $w={134} $bold><Box defaultChecked />Mostrar opciones avanzadas</Check></Line>
        </Card>

        <Card>
          <Line $h={17}><svg width="13" height="16"><rect x="2" y="0" width="5" height="15" rx="1" fill="#c9b46a" /><path d="M3 14L6 2" stroke="#fff3c0" /></svg><Cell $w={27}><Strong>Herr:</Strong></Cell>Fresa universal (1/4")</Line>
          <ButtonPair $gap={14} $mt={1} $pl={79}><ToolAction $w={53} $h={16}>Selecionar</ToolAction><ToolAction $w={53} $h={16}>Editar</ToolAction></ButtonPair>
          <Rule $mt={5} />
          <Line $h={16} $mt={4}><Cell $w={44}><Strong>Pasadas</Strong></Cell><Cell $w={35}>11</Cell><EditPasses $w={120} $h={16} $hot>Editar pasadas...</EditPasses></Line>
          <Line $h={4} />
        </Card>

        <Card>
          <Columns $left={106} $h={63}>
            <div>
              <SubHead>Mecanizar vectores...</SubHead>
              <Line $h={16} $pl={6}><Check $bold><Dot name="side" defaultChecked />Por Fuera/ Derecha</Check></Line>
              <Line $h={16} $pl={6}><Check $bold><Dot name="side" />Dentro/ Izquierda</Check></Line>
              <Line $h={16} $pl={6}><Check $bold><Dot name="side" />Sobre</Check></Line>
            </div>
            <svg width="52" height="62" viewBox="0 0 52 62"><rect x="8" y="13" width="38" height="38" fill="#fff" stroke="#444" strokeWidth="1.200" /><path d="M12 5L9 9L12 12M18 5L15 9L18 12M10 9H24" fill="none" stroke="#cdb94e" /><circle cx="27" cy="8" r="5" fill="#f4e46a" stroke="#a08f2e" /></svg>
          </Columns>
          <Line $h={17}><Cell $w={56}><Strong>Dir.</Strong></Cell><Check $w={51}><Dot name="dir" defaultChecked />Contramarcha</Check><Check><Dot name="dir" />A favor de marcha</Check></Line>
          <Line $h={19}><Cell as="label" htmlFor="tol" $w={106}>Tolerancia desplazamiento</Cell><Field id="tol" $w={45} $ml={-18} $clear /><Unit $ml={5}>mm</Unit></Line>
        </Card>

        <Card>
          <Line $h={18}><Check $bold><Box />Separacion ultima pasada</Check></Line>
          <WithIcon>
            <svg width="40" height="40" viewBox="0 0 40 40"><rect x="6" y="22" width="12" height="11" fill="#8c8c8c" /><path d="M18.500 22V33M18 33H36M25 22.500H36M24 28H36" stroke="#253060" strokeWidth="1.800" fill="none" /><path d="M18.500 21V15L22 12L25.500 15V22" stroke="#555" fill="none" strokeDasharray="2 1" /><path d="M19.500 11L22 4L24.500 11M20 9H24" stroke="#222" fill="none" strokeWidth="1.300" /></svg>
            <Stack>
              <Line $h={19} $dim><Cell as="label" htmlFor="ta" $w={61}>Tolerancia (A)</Cell><Field id="ta" $w={50} $h={18} disabled defaultValue="0.0" /><Unit $ml={4}>mm</Unit></Line>
              <Line $h={22} $pl={7}><Check $dim><Box disabled />Inverter la dirección</Check></Line>
            </Stack>
          </WithIcon>
        </Card>

        <Card>
          <Line $h={20}><Check $w={167} $bold><Box />Anadir Pensransas a la trayectoria</Check></Line>
          <Line $h={26} $pl={12} $dim><svg width="44" height="28" viewBox="0 0 44 28"><path d="M8 5H22V19H8Z" fill="#f8e7a0" /><path d="M1 9H30V13H1Z" fill="#ead58a" /><path d="M1 18H28Q32 22 27 25H2Z" fill="#dcbd62" /><path d="M7.500 1V13M21.500 1V13M1 9.500H30" stroke="#333" strokeDasharray="2 1" /></svg><Cell as="label" htmlFor="lon" $w={55}>Longitud</Cell><Field id="lon" $w={33} disabled defaultValue="12.0" /><Unit $ml={5}>mm</Unit></Line>
          <Line $h={25} $pl={12} $dim><svg width="44" height="14" viewBox="0 0 44 14"><rect x="1" y="2" width="29" height="10" rx="2" fill="#e2c774" /><rect x="7" y="5" width="18" height="5" fill="#a7751f" /><path d="M16 5.500H32M16 9.500H32" stroke="#222" strokeDasharray="2 1" /></svg><Cell as="label" htmlFor="esp" $w={55}>Espesor</Cell><Field id="esp" $w={33} disabled defaultValue="3.0" /><Unit $ml={5}>mm</Unit></Line>
          <Line $h={23} $pl={12} $dim><svg width="44" height="14" viewBox="0 0 44 14"><rect x="1" y="1" width="28" height="12" fill="#eed384" /><path d="M5 11Q15 2 25 11Z" fill="#9e6a17" /></svg><Check $dim $w={79}><Box disabled />Pestanas 3D</Check><Button $w={73} disabled>Editar Pestanas ...</Button></Line>
        </Card>

        <Card>
          <TabStrip><RampTab $w={46} $on>Rampas</RampTab><RampTab $w={51}>Rampa L.</RampTab><RampTab $w={40}>Orden</RampTab><RampTab $w={40}>Empezar</RampTab><TabArrow aria-label="Anterior"><Tri d="l" /></TabArrow><TabArrow aria-label="Siguiente"><Tri d="r" /></TabArrow></TabStrip>
          <TabPage>
            <Line $h={18}><Check $bold><Box />Agregar rampa de entrada</Check></Line>
            <WithIcon>
              <Line $h={14} $pl={5} $dim><Cell $w={23}>Tipo</Cell></Line>
              <svg width="61" height="42" viewBox="0 0 61 42"><ellipse cx="25" cy="19" rx="20" ry="9.500" fill="none" stroke="#555" strokeWidth="1.300" /><rect x="23.500" y="9" width="4" height="10" fill="#e0a53a" /><path d="M25.500 12V29" stroke="#7a3b2a" /><path d="M22.500 28.500H28.500M25.500 26V31" stroke="#222" strokeWidth="2" /></svg>
              <div>
                <Line $h={14}><Check $dim><Dot name="ramp" disabled defaultChecked />Suave</Check></Line>
                <Line $h={14}><Check $dim><Dot name="ramp" disabled />Zigzag</Check></Line>
                <Line $h={14}><Check $dim><Dot name="ramp" disabled />Espiral</Check></Line>
              </div>
            </WithIcon>
            <Line $h={12} $pl={2} $dim>Especificar rampa...</Line>
            <Line $h={17} $pl={29}><Check $dim $bold><Box disabled />Rampa a la entrada</Check></Line>
            <Line $h={18} $pl={27} $dim><Check $w={60}><Dot name="by" disabled defaultChecked />Distancia</Check><Field $w={33} disabled defaultValue="100.0" aria-label="Distancia" /><Unit $ml={4}>mm</Unit></Line>
            <Line $h={20} $pl={27} $dim><Check $w={60}><Dot name="by" disabled />Angulo</Check><Field $w={33} disabled defaultValue="20.0" aria-label="Angulo" /><Unit $ml={4}>grados</Unit></Line>
            <Line $h={20} $pl={41} $dim><Cell $w={46}>Distancia</Cell><Field $w={33} disabled defaultValue="100.0" aria-label="Distancia final" /><Unit $ml={4}>mm</Unit></Line>
          </TabPage>
        </Card>

        <Card>
          <Line $h={14} $mt={2}><Cell $w={65}>Z seguro</Cell>5.0 mm</Line>
          <Line $h={13}><Cell $w={65}>Posición inicial</Cell>X:0.00 Y:0.00 Z:5.09</Line>
          <Line $h={17}><Check $bold><Box />Proyectar mecanizado en modelo 3D</Check></Line>
          <Rule $mt={1} />
          <Line $h={23} $pl={2}><ClippedCell $w={82}>Selección de vectores:</ClippedCell><Cell $w={56}>Manual</Cell><ToolAction $w={60} $h={16}>Seleccionar...</ToolAction></Line>
          <Rule />
          <Line $h={25}><Cell as="label" htmlFor="nom" $w={35}>Nombre:</Cell><Field id="nom" $w={156} defaultValue="Perfilado 1" /></Line>
        </Card>
        <BottomButtons><Button $w={61}>Calcular</Button><Button $w={61}>Cerrar</Button></BottomButtons>
      </CardStack>
      <TallScroll $v><ScrollArrow aria-label="Subir"><Chevron d="u" /></ScrollArrow><TallThumb /><ScrollArrow aria-label="Bajar"><Chevron d="d" /></ScrollArrow></TallScroll>
    </RightBody>
  </RightDock>
);

export default function App() {
  return (
    <>
      <Global />
      <Shell>
        <TitleBar>
          <Logo /><span>VCarve Pro 11.554 - (Universidad Científica del Sur - Carrera de Arquitectura y Urbanismo Ambiental ) - [Nuevo]</span><Spacer />
          <WindowButtons $gap={28}>
            <svg width="10" height="10"><path d="M0 5.500H10" stroke="#888" /></svg>
            <svg width="10" height="10"><path d="M.5 2.500H7.500V9.500H.5ZM2.500 2.500V.5H9.500V7.500H7.500" stroke="#888" fill="none" /></svg>
            <svg width="9" height="9"><path d="M0 0L9 9M9 0L0 9" stroke="#888" /></svg>
          </WindowButtons>
        </TitleBar>
        <MenuBar>
          {['Archivo', 'Edición', 'Modelo', 'Máquina', 'Mecanizados', 'Ver', 'Artilugio', 'Ayuda'].map(m => <MenuItem key={m}>{m}</MenuItem>)}
          <Spacer />
          <WindowButtons $gap={4}>
            <svg width="13" height="13" viewBox="0 0 13 13"><circle cx="6.500" cy="6.500" r="5.800" fill="none" stroke="#222" /><circle cx="6.500" cy="5" r="2" fill="#222" /><path d="M2.500 10Q6.500 5.500 10.500 10Q6.500 13 2.500 10Z" fill="#222" /></svg>
            <MenuItem>Registrarse...</MenuItem>
            <WindowButtons $gap={6}>
              <svg width="7" height="9"><path d="M0 7H6" stroke="#222" strokeWidth="2" /></svg>
              <svg width="9" height="9"><path d="M1 4H6V8H1ZM3 3V1H8V6H7" stroke="#222" fill="none" strokeWidth="1.500" /></svg>
              <svg width="8" height="9"><path d="M1 1L7 8M7 1L1 8" stroke="#222" strokeWidth="2" /></svg>
            </WindowButtons>
          </WindowButtons>
        </MenuBar>
        <Workspace><LeftPanel /><CentrePanel /><RightPanel /></Workspace>
        <StatusBar>Preparado<Spacer /><Coords>X:1359.2711 Y:728.4218</Coords><span>W:384.454&nbsp; H:17.749&nbsp; S:2</span></StatusBar>
        <TaskBar>
          <TaskButton $w={39} aria-label="Inicio"><svg width="14" height="14"><path d="M0 2L6 1V6.500H0ZM7 .8L14 0V6.500H7ZM0 7.500H6V13L0 12ZM7 7.500H14V14L7 13Z" fill="#fff" /></svg></TaskButton>
          <TaskButton $w={40} aria-label="Buscar"><svg width="20" height="20"><circle cx="12" cy="8" r="6" fill="none" stroke="#fff" strokeWidth="1.800" /><path d="M8 12.500L2 19" stroke="#fff" strokeWidth="1.800" /></svg></TaskButton>
          <TaskButton $w={41} aria-label="Vista de tareas"><svg width="14" height="14"><path d="M0 1.500H9M0 12.500H9M.5 4.500H8.500V9.500H.5ZM12 0V3M12 7V14" stroke="#fff" fill="none" /><rect x="10.500" y="4" width="3" height="3" fill="#fff" /></svg></TaskButton>
          <TaskButton $w={42} $open aria-label="Explorador"><svg width="20" height="17"><path d="M1 1H7L9 3H19V16H1Z" fill="#e9b949" /><rect x="1" y="4" width="18" height="10" fill="#fbd873" /><path d="M5 16V10H15V16H12V13H8V16Z" fill="#4a9fd0" /></svg></TaskButton>
          <TaskButton $w={41} $open aria-label="Chrome"><svg width="20" height="20" viewBox="0 0 20 20"><circle cx="10" cy="10" r="9.500" fill="#e8c238" /><path d="M10 10L1.800 5.200A9.500 9.500 0 0 1 18.200 5.200H10Z" fill="#dc4437" /><path d="M10 10L1.800 5.200A9.500 9.500 0 0 0 9 19.500L13 12Z" fill="#2fa052" /><circle cx="10" cy="10" r="4.600" fill="#fff" /><circle cx="10" cy="10" r="3.600" fill="#3d7de0" /></svg></TaskButton>
          <TaskButton $w={41} $open aria-label="AutoCAD"><svg width="17" height="20" viewBox="0 0 17 20"><rect width="17" height="20" rx="2" fill="#d01a48" /><path d="M5 12L8.500 3L12 12M6.500 9H10.500" stroke="#fff" strokeWidth="2" fill="none" /><path d="M5 16.500H12" stroke="#fff" strokeDasharray="2 .5" strokeWidth="1.500" /></svg></TaskButton>
          <TaskButton $w={41} $on aria-label="VCarve"><Logo s={15} c="#2f4a8e" /></TaskButton>
          <Tray>
            <Chevron d="u" c="#fff" />
            <svg width="11" height="13"><path d="M1 1.500H8M1 4.500H8V10.500H1ZM8 6H10V9H8M2 12.500H7" stroke="#fff" fill="none" /></svg>
            <svg width="13" height="11"><path d="M1 4H3L6 1V10L3 7H1ZM8 3.500L12 7.500M12 3.500L8 7.500" stroke="#fff" fill="none" /></svg>
            <svg width="11" height="11"><path d="M1 10A9 9 0 0 1 10 1M4 10A6 6 0 0 1 10 4M7 10A3 3 0 0 1 10 7" stroke="#b8c2cc" fill="none" strokeWidth="1.300" /></svg>
            <span>ESP</span>
            <Clock>16:50<br />8/03/2024</Clock>
            <svg width="20" height="20" viewBox="0 0 20 20"><path d="M1 2H14V12H7L4 15V12H1Z" fill="#fff" /><path d="M3 5H12M3 8H12" stroke="#1c2a40" /><circle cx="13.500" cy="13" r="5.500" fill="#39475a" stroke="#aab" strokeWidth=".7" /><text x="13.500" y="16.500" fontSize="9" fill="#fff" textAnchor="middle">6</text></svg>
            <Edge />
          </Tray>
        </TaskBar>
      </Shell>
    </>
  );
}
